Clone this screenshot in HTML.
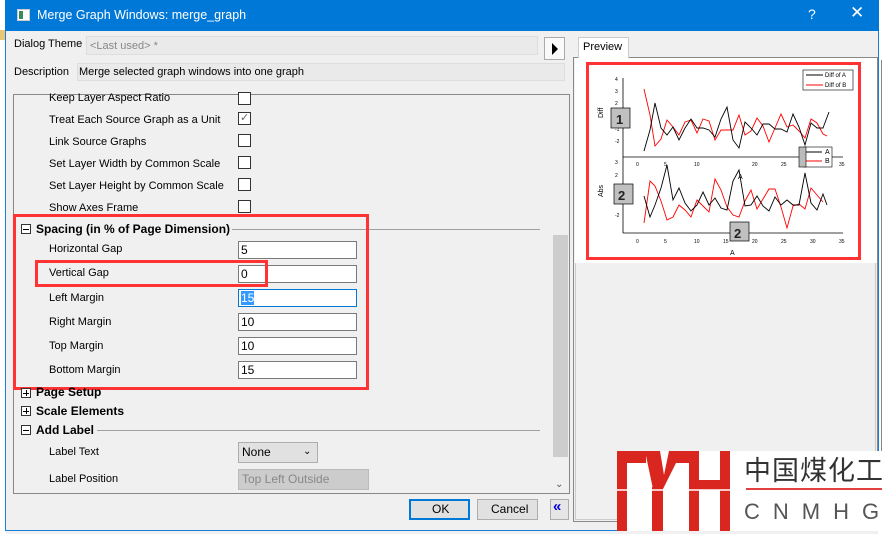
<!DOCTYPE html>
<html><head><meta charset="utf-8"><style>
*{box-sizing:border-box;margin:0;padding:0}
body{width:888px;height:534px;overflow:hidden;background:#f0f0f0;font-family:"Liberation Sans",sans-serif;font-size:11px;color:#000;position:relative}
.a{position:absolute}
.t{position:absolute;font-size:11px;white-space:nowrap;line-height:13px}
.cb{position:absolute;width:13px;height:13px;border:1px solid #333;background:#fff}
.in{position:absolute;width:119px;height:18px;border:1px solid #7a7a7a;background:#fff;font-size:12px;padding-left:2px;line-height:16px}
.b{font-weight:bold;font-size:12px}
.pm{position:absolute;width:10px;height:10px;border:1px solid #333;background:#fff}
.pm:before{content:"";position:absolute;left:1px;top:3.5px;width:6px;height:1px;background:#000}
.pp:after{content:"";position:absolute;left:3.5px;top:1px;width:1px;height:6px;background:#000}
</style></head><body>
<div class="a" style="left:0;top:0;width:6px;height:534px;background:#fff"></div>
<div class="a" style="left:0;top:30px;width:5px;height:10px;background:#e8c870"></div>
<div class="a" style="left:878px;top:0;width:10px;height:534px;background:#fff"></div>
<div class="a" style="left:881px;top:60px;width:1px;height:460px;background:#888"></div>
<div class="a" style="left:5px;top:0;width:874px;height:531px;background:#f0f0f0;border:1px solid #1a7fd6"></div>
<div class="a" style="left:5px;top:0;width:874px;height:31px;background:#0078d7"></div>
<div class="a" style="left:17px;top:9px;width:13px;height:12px;background:#fff;border:1px solid #ccc"><div class="a" style="left:1px;top:1px;width:4px;height:8px;background:#3a8a5a"></div></div>
<div class="t" style="left:37px;top:9px;color:#fff;font-size:12.5px">Merge Graph Windows: merge_graph</div>
<div class="t" style="left:808px;top:8px;color:#fff;font-size:14px">?</div>
<div class="t" style="left:850px;top:6px;color:#fff;font-size:17px">✕</div>
<div class="t" style="left:14px;top:38px">Dialog Theme</div>
<div class="a" style="left:86px;top:36px;width:452px;height:19px;background:#eaeaea;border:1px solid #ddd"></div>
<div class="t" style="left:90px;top:40px;color:#888">&lt;Last used&gt; *</div>
<div class="a" style="left:544px;top:37px;width:21px;height:23px;background:#fafafa;border:1px solid #aaa"></div>
<div class="a" style="left:552px;top:43px;width:0;height:0;border-left:6px solid #000;border-top:6px solid transparent;border-bottom:6px solid transparent"></div>
<div class="t" style="left:14px;top:66px">Description</div>
<div class="a" style="left:77px;top:63px;width:488px;height:18px;background:#eaeaea;border:1px solid #ddd"></div>
<div class="t" style="left:79px;top:66px">Merge selected graph windows into one graph</div>
<div class="a" style="left:13px;top:94px;width:557px;height:400px;border:1px solid #888"></div>
<div class="a" style="left:553px;top:95px;width:16px;height:398px;background:#f0f0f0"></div>
<div class="a" style="left:553px;top:235px;width:15px;height:222px;background:#cdcdcd"></div>
<div class="t" style="left:555px;top:478px;color:#555;font-size:10px">⌄</div>
<div class="t" style="left:49px;top:92px">Keep Layer Aspect Ratio</div>
<div class="t" style="left:49px;top:114px">Treat Each Source Graph as a Unit</div>
<div class="t" style="left:49px;top:136px">Link Source Graphs</div>
<div class="t" style="left:49px;top:158px">Set Layer Width by Common Scale</div>
<div class="t" style="left:49px;top:180px">Set Layer Height by Common Scale</div>
<div class="t" style="left:49px;top:202px">Show Axes Frame</div>
<div class="cb" style="left:238px;top:92px"></div>
<div class="cb" style="left:238px;top:112px"><div class="t" style="left:1px;top:-1px;color:#666;font-size:11px">✓</div></div>
<div class="cb" style="left:238px;top:134px"></div>
<div class="cb" style="left:238px;top:156px"></div>
<div class="cb" style="left:238px;top:178px"></div>
<div class="cb" style="left:238px;top:200px"></div>
<div class="pm" style="left:21px;top:224px"></div>
<div class="t b" style="left:36px;top:223px">Spacing (in % of Page Dimension)</div>
<div class="a" style="left:232px;top:229px;width:308px;height:1px;background:#a0a0a0"></div>
<div class="t" style="left:49px;top:243px">Horizontal Gap</div>
<div class="t" style="left:49px;top:267px">Vertical Gap</div>
<div class="t" style="left:49px;top:292px">Left Margin</div>
<div class="t" style="left:49px;top:316px">Right Margin</div>
<div class="t" style="left:49px;top:340px">Top Margin</div>
<div class="t" style="left:49px;top:364px">Bottom Margin</div>
<div class="in" style="left:238px;top:241px">5</div>
<div class="in" style="left:238px;top:265px">0</div>
<div class="in" style="left:238px;top:289px;border-color:#0078d7"><span style="background:#3399ff;color:#fff">15</span></div>
<div class="in" style="left:238px;top:313px">10</div>
<div class="in" style="left:238px;top:337px">10</div>
<div class="in" style="left:238px;top:361px">15</div>
<div class="a" style="left:13px;top:214px;width:356px;height:176px;border:3px solid #f33"></div>
<div class="a" style="left:35px;top:260px;width:233px;height:27px;border:3px solid #f33"></div>
<div class="pm pp" style="left:21px;top:388px"></div>
<div class="t b" style="left:36px;top:386px">Page Setup</div>
<div class="pm pp" style="left:21px;top:406px"></div>
<div class="t b" style="left:36px;top:405px">Scale Elements</div>
<div class="pm" style="left:21px;top:425px"></div>
<div class="t b" style="left:36px;top:424px">Add Label</div>
<div class="a" style="left:97px;top:430px;width:443px;height:1px;background:#a0a0a0"></div>
<div class="t" style="left:49px;top:446px">Label Text</div>
<div class="t" style="left:49px;top:473px">Label Position</div>
<div class="a" style="left:238px;top:442px;width:80px;height:21px;background:#e1e1e1;border:1px solid #adadad"></div>
<div class="t" style="left:242px;top:446px;font-size:12px">None</div>
<div class="t" style="left:303px;top:445px;font-size:10px">⌄</div>
<div class="a" style="left:238px;top:469px;width:131px;height:21px;background:#ccc;border:1px solid #bbb"></div>
<div class="t" style="left:242px;top:473px;font-size:12px;color:#888">Top Left Outside</div>
<div class="a" style="left:409px;top:499px;width:61px;height:21px;background:#e1e1e1;border:2px solid #0078d7"></div>
<div class="t" style="left:432px;top:503px;font-size:12px">OK</div>
<div class="a" style="left:477px;top:499px;width:61px;height:21px;background:#e1e1e1;border:1px solid #adadad"></div>
<div class="t" style="left:491px;top:503px;font-size:12px">Cancel</div>
<div class="a" style="left:550px;top:499px;width:19px;height:21px;background:#e6e6e6;border:1px solid #adadad"></div>
<div class="t" style="left:553px;top:500px;font-size:15px;color:#0000e0;font-weight:bold">«</div>
<div class="a" style="left:573px;top:57px;width:305px;height:465px;border:1px solid #888;outline:1px solid #ccc;outline-offset:-3px"></div>
<div class="a" style="left:578px;top:37px;width:51px;height:21px;background:#fff;border:1px solid #ccc;border-bottom:none"></div>
<div class="t" style="left:583px;top:41px">Preview</div>
<div class="a" style="left:575px;top:58px;width:302px;height:205px;background:#fff"></div>
<svg class="a" style="left:586px;top:62px" width="275" height="198" viewBox="586 62 275 198" font-family="Liberation Sans" font-size="6">
<rect x="587.5" y="63.5" width="272" height="195" fill="#fff" stroke="#f33" stroke-width="3"/>
<g stroke="#000" stroke-width="0.8" fill="none">
<line x1="623" y1="78" x2="623" y2="233"/><line x1="623" y1="157" x2="843" y2="157"/><line x1="623" y1="233" x2="843" y2="233"/>
</g>
<g font-size="5">
<text x="615" y="81">4</text><text x="615" y="93">3</text><text x="615" y="105">2</text><text x="615" y="131">-1</text><text x="615" y="143">-2</text>
<text x="615" y="164">3</text><text x="615" y="177">2</text><text x="615" y="204">-1</text><text x="615" y="217">-2</text>
<text x="636" y="166">0</text><text x="664" y="166">5</text><text x="694" y="166">10</text><text x="752" y="166">20</text><text x="781" y="166">25</text><text x="839" y="166">35</text>
<text x="636" y="243">0</text><text x="664" y="243">5</text><text x="694" y="243">10</text><text x="723" y="243">15</text><text x="752" y="243">20</text><text x="781" y="243">25</text><text x="810" y="243">30</text><text x="839" y="243">35</text>
</g>
<text x="730" y="255" font-size="7">A</text><text x="738" y="179" font-size="7">A</text>
<text x="603" y="118" font-size="7" transform="rotate(-90 603 118)">Diff</text>
<text x="603" y="197" font-size="7" transform="rotate(-90 603 197)">Abs</text>
<polyline fill="none" stroke="#f00" stroke-width="0.9" points="644,89 650,115 655,146 661,139 667,120 673,127 679,135 685,122 691,120 697,133 703,119 709,121 715,140 721,130 727,130 733,130 739,115 745,135 751,131 757,118 763,126 769,142 775,128 781,114 787,127 793,125 799,131 805,138 811,119 817,123 823,134 827,136"/>
<polyline fill="none" stroke="#000" stroke-width="0.9" points="644,151 650,130 655,103 661,128 667,135 673,127 679,140 685,128 691,119 697,128 703,128 709,130 715,137 721,119 727,107 733,140 739,148 745,122 751,128 757,135 763,124 769,124 775,129 781,129 787,132 793,114 799,127 805,145 811,123 817,128 823,128 829,112"/>
<polyline fill="none" stroke="#f00" stroke-width="0.9" points="644,223 650,181 655,186 661,201 667,220 673,217 679,205 685,210 691,217 697,200 703,206 709,212 715,179 721,190 727,207 733,215 739,217 745,201 751,190 757,209 763,199 769,189 775,189 781,207 787,228 793,206 799,204 805,209 811,188 817,195 823,202"/>
<polyline fill="none" stroke="#000" stroke-width="0.9" points="644,196 650,217 655,205 661,188 667,165 673,200 679,188 685,203 691,211 697,205 703,192 709,205 715,198 721,208 727,210 733,181 739,170 745,206 751,205 757,196 763,206 769,211 775,197 781,205 787,200 793,205 799,205 805,173 811,203 817,210 823,194 827,205"/>
<rect x="803" y="70" width="50" height="20" fill="#fff" stroke="#000" stroke-width="0.6"/>
<line x1="806" y1="75" x2="823" y2="75" stroke="#000"/><text x="825" y="77" font-size="6">Diff of A</text>
<line x1="806" y1="85" x2="823" y2="85" stroke="#f00"/><text x="825" y="87" font-size="6">Diff of B</text>
<rect x="804" y="147" width="28" height="20" fill="#fff" stroke="#000" stroke-width="0.6"/>
<line x1="805" y1="152" x2="822" y2="152" stroke="#000"/><text x="825" y="154" font-size="7">A</text>
<line x1="805" y1="161" x2="822" y2="161" stroke="#f00"/><text x="825" y="163" font-size="7">B</text>
<rect x="799" y="147" width="7" height="20" fill="#bbb" stroke="#000" stroke-width="0.6"/>
<g font-size="13" font-weight="bold" fill="#222">
<rect x="611" y="108" width="19" height="20" fill="#c0c0c0" stroke="#000" stroke-width="0.7"/><text x="616" y="124">1</text>
<rect x="614" y="184" width="19" height="20" fill="#c0c0c0" stroke="#000" stroke-width="0.7"/><text x="618" y="200">2</text>
<rect x="730" y="222" width="19" height="19" fill="#c0c0c0" stroke="#000" stroke-width="0.7"/><text x="734" y="238">2</text>
</g>
</svg>
<div class="a" style="left:617px;top:451px;width:267px;height:80px;background:#fff"></div>
<svg class="a" style="left:617px;top:451px" width="114" height="80" viewBox="0 0 114 80">
<g fill="#d9261f">
<rect x="0" y="0" width="10" height="80"/>
<rect x="0" y="0" width="29" height="12"/>
<polygon points="28,0 43,0 47,24 52,0 65,0 46,38 36,38"/>
<rect x="35" y="36" width="11" height="44"/>
<rect x="52" y="0" width="30" height="12"/>
<rect x="72" y="0" width="10" height="80"/>
<rect x="72" y="29" width="41" height="10"/>
<rect x="103" y="0" width="10" height="80"/>
</g>
<rect x="0" y="38" width="114" height="2" fill="#fff" opacity=".75"/>
</svg>
<div class="t" style="left:744px;top:455px;font-family:'Liberation Sans','Noto Sans CJK SC',sans-serif;font-size:27px;line-height:32px;color:#333;letter-spacing:1px">中国煤化工</div>
<div class="a" style="left:746px;top:488px;width:136px;height:2px;background:#e04040"></div>
<div class="t" style="left:744px;top:500px;font-size:22px;line-height:24px;color:#555;letter-spacing:13px">CNMHG</div>
</body></html>
